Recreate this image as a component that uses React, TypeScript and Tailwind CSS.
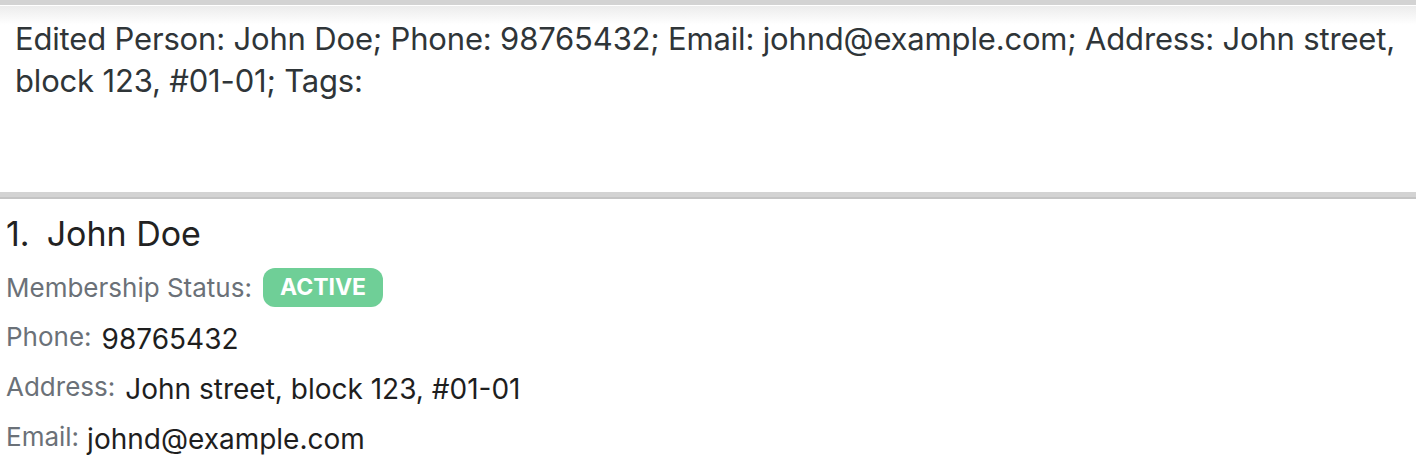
import React from 'react'

const rows = [
  { label: 'Phone:', value: '98765432', gap: 'ml-[10px]' },
  { label: 'Address:', value: 'John street, block 123, #01-01', gap: 'ml-[10px]' },
  { label: 'Email:', value: 'johnd@example.com', gap: 'ml-[8px]' },
]

const App = () => {
  return (
    <div className="w-[1416px] h-[474px] overflow-hidden bg-white font-['Inter',sans-serif]">
      {/* top border */}
      <div className="h-[5px] bg-[#d3d3d3]" />
      <div className="h-[1px] bg-white" />

      {/* result display */}
      <div className="h-[186px] bg-gradient-to-b from-[#ececec] via-white via-[10%] to-white px-[15px] pt-[12px]">
        <p className="text-[31px] leading-[42px] text-[#2f3538] tracking-[-0.17px]">
          Edited Person: John Doe; Phone: 98765432; Email: johnd@example.com; Address: John street,
          <br />
          block 123, #01-01; Tags:
        </p>
      </div>

      {/* splitter */}
      <div className="h-[5px] bg-[#d3d3d3]" />
      <div className="h-[2px] bg-[#c4c4c4]" />

      {/* person card */}
      <div className="px-[6px] pt-[15px]">
        <div className="flex items-baseline text-[34px] leading-[40px] text-[#222222]">
          <span>1.</span>
          <span className="ml-[17px]">John Doe</span>
        </div>

        <div className="mt-[13px] flex items-center h-[40px]">
          <span className="text-[26px] text-[#6b7178]">Membership Status:</span>
          <span className="ml-[11px] rounded-[12px] bg-[#6fcf97] px-[17px] h-[39px] flex items-center text-[23px] font-bold text-white">
            ACTIVE
          </span>
        </div>

        {rows.map((r) => (
          <div key={r.label} className="mt-[10px] flex items-baseline h-[40px] pt-[1px]">
            <span className="text-[26px] text-[#6b7178] -translate-y-[3px]">{r.label}</span>
            <span className={`${r.gap} text-[28px] text-[#1e1e1e]`}>{r.value}</span>
          </div>
        ))}
      </div>
    </div>
  )
}

export default App
